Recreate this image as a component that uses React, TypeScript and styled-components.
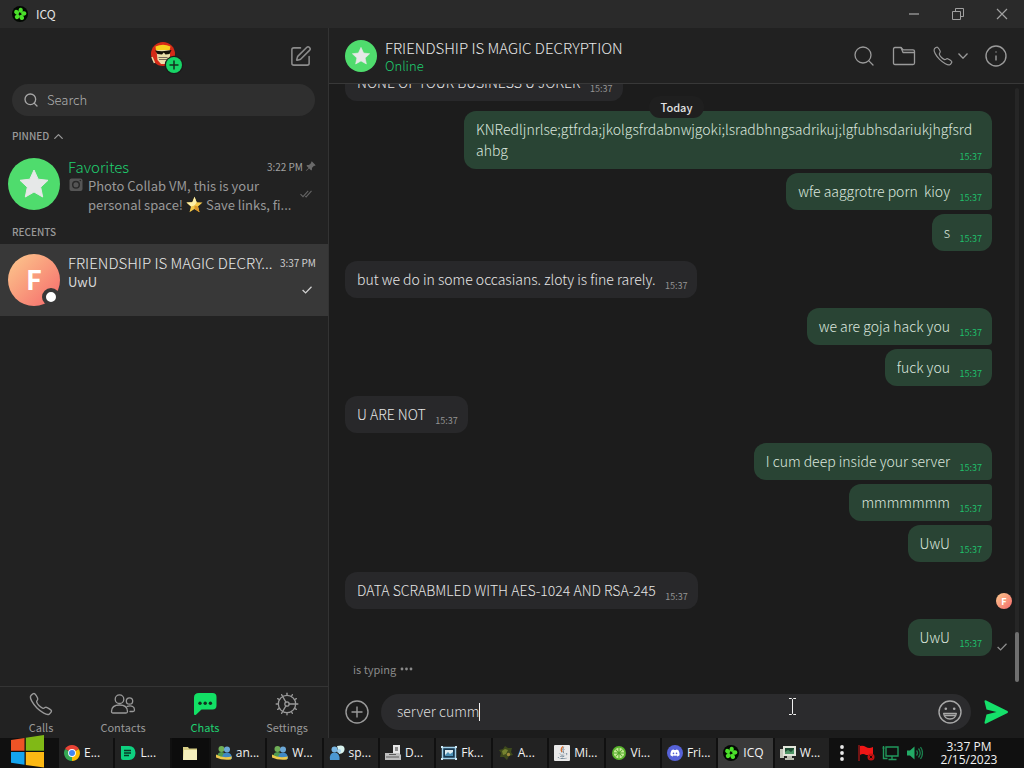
import React from "react";
import styled, { createGlobalStyle, css } from "styled-components";
import { Search, Info, Cog, SquarePen, ChevronUp } from "lucide-react";
import { FaDiscord, FaJava } from "react-icons/fa";
import { BsPinAngleFill } from "react-icons/bs";
import { IoCallOutline } from "react-icons/io5";

const GlobalStyle = createGlobalStyle`
  * { box-sizing: border-box; }
  body { margin: 0; background: #1c1c1c; }
  button, input { font: inherit; color: inherit; border: 0; padding: 0; margin: 0; background: none; }
  h1, h2, p, ul { margin: 0; padding: 0; font-weight: inherit; }
  ul { list-style: none; }
  svg { display: block; flex: none; }
`;

const ui = `"Noto Sans CJK SC", "Open Sans", sans-serif`;

const Screen = styled.div`
  height: 100vh;
  display: flex;
  flex-direction: column;
  overflow: hidden;
  background: #1c1c1c;
  color: #dcdcdc;
  font-family: ${ui};
  font-size: 14px;
  line-height: 20px;
  font-weight: 300;
`;

const TitleBar = styled.header`
  flex: none;
  height: 28px;
  display: flex;
  align-items: center;
  justify-content: space-between;
  padding: 0 8px 0 12px;
  background: #2a2a2a;
`;

const AppName = styled.h1`
  display: flex;
  align-items: center;
  gap: 8px;
  font-size: 12px;
  line-height: 16px;
  font-weight: 400;
  color: #e4e4e4;
`;

const WindowButtons = styled.div`
  display: flex;
  gap: 16px;
`;

const WindowButton = styled.button`
  width: 28px;
  height: 28px;
  display: grid;
  place-items: center;
  color: #a0a0a0;
`;

const Body = styled.div`
  flex: 1;
  min-height: 0;
  display: flex;
`;

const Sidebar = styled.aside`
  flex: none;
  width: 329px;
  display: flex;
  flex-direction: column;
  background: #222222;
  border-right: 1px solid #333333;
`;

const SidebarTop = styled.div`
  height: 56px;
  display: grid;
  grid-template-columns: 1fr auto 1fr;
  align-items: center;
  padding: 0 16px;
`;

const ProfileButton = styled.button`
  grid-column: 2;
  width: 34px;
  height: 36px;
  display: grid;
  place-items: center;
`;

const ComposeButton = styled.button`
  grid-column: 3;
  justify-self: end;
  color: #8c8c8c;
`;

const SearchBox = styled.label`
  height: 32px;
  margin: 0 13px 8px 12px;
  padding: 0 11px;
  display: flex;
  align-items: center;
  gap: 8px;
  border-radius: 16px;
  background: #2f2f2f;
  color: #a6a6a6;
`;

const SearchInput = styled.input`
  flex: 1;
  min-width: 0;
  outline: none;
  font-size: 13px;
  line-height: 20px;
  &::placeholder { color: #b0b0b0; opacity: 1; }
`;

const SectionLabel = styled.h2`
  height: 24px;
  display: flex;
  align-items: center;
  gap: 2px;
  padding-left: 12px;
  font-size: 10px;
  line-height: 16px;
  font-weight: 500;
  color: #9a9a9a;
`;

const ChatRow = styled.button<{ $active?: boolean }>`
  width: 100%;
  height: 72px;
  display: flex;
  gap: 8px;
  padding: 0 12px 0 8px;
  text-align: left;
  background: ${(p) => (p.$active ? "#383838" : "none")};
`;

const AvatarSlot = styled.span`
  position: relative;
  flex: none;
  align-self: center;
  width: 52px;
  height: 52px;
`;

const Presence = styled.span`
  position: absolute;
  right: 0;
  bottom: 0;
  width: 18px;
  height: 18px;
  border: 4px solid #383838;
  border-radius: 50%;
  background: #ffffff;
`;

const ChatText = styled.span`
  flex: 1;
  min-width: 0;
  display: flex;
  flex-direction: column;
  padding-top: 9px;
`;

const ChatHead = styled.span`
  display: flex;
  align-items: center;
  gap: 6px;
  height: 19px;
`;

const ChatName = styled.span<{ $accent?: boolean }>`
  flex: 1;
  min-width: 0;
  white-space: nowrap;
  font-size: 15px;
  line-height: 20px;
  color: ${(p) => (p.$accent ? "#1fd070" : "#e8e8e8")};
`;

const ChatTime = styled.span<{ $active?: boolean }>`
  display: flex;
  align-items: center;
  gap: 2px;
  font-size: 10px;
  line-height: 16px;
  font-weight: 400;
  color: ${(p) => (p.$active ? "#d0d0d0" : "#a0a0a0")};
  svg { color: #6a6a6a; }
`;

const Preview = styled.span<{ $active?: boolean }>`
  display: flex;
  align-items: flex-start;
  gap: 5px;
  font-size: 13px;
  line-height: 19px;
  font-weight: 400;
  color: ${(p) => (p.$active ? "#d8d8d8" : "#999999")};
`;

const PreviewText = styled.span`
  flex: 1;
  min-width: 0;
`;

const PreviewLine = styled.span`
  display: flex;
  align-items: center;
  white-space: pre;
`;

const CameraSlot = styled.span`
  padding-top: 1px;
`;

const StatusSlot = styled.span`
  margin-right: 4px;
  padding-top: 14px;
`;

const Tabs = styled.nav`
  margin-top: auto;
  height: 52px;
  display: grid;
  grid-template-columns: repeat(4, 1fr);
  border-top: 1px solid #343434;
`;

const Tab = styled.button<{ $active?: boolean }>`
  display: flex;
  flex-direction: column;
  align-items: center;
  padding-top: 4px;
  gap: 2px;
  font-size: 11px;
  line-height: 16px;
  font-weight: 400;
  color: ${(p) => (p.$active ? "#1fd070" : "#999999")};
`;

const Conversation = styled.main`
  flex: 1;
  min-width: 0;
  display: flex;
  flex-direction: column;
`;

const ConversationHead = styled.div`
  flex: none;
  height: 56px;
  display: flex;
  align-items: center;
  gap: 8px;
  padding: 0 16px;
  background: #212121;
  border-bottom: 1px solid #383838;
`;

const PeerInfo = styled.div`
  flex: 1;
  min-width: 0;
  padding-top: 2px;
`;

const PeerName = styled.h2`
  font-size: 15px;
  line-height: 18px;
  color: #e8e8e8;
`;

const PeerStatus = styled.p`
  font-size: 13px;
  line-height: 18px;
  color: #1fd070;
`;

const HeadActions = styled.div`
  display: flex;
  align-items: center;
  gap: 16px;
  color: #9a9a9a;
`;

const IconButton = styled.button`
  display: flex;
  align-items: center;
  gap: 4px;
`;

const Handset = styled(IoCallOutline)`
  path { stroke-width: 27px; }
`;

const Thread = styled.section`
  position: relative;
  flex: 1;
  min-height: 0;
  overflow: hidden;
  display: flex;
  flex-direction: column;
  justify-content: flex-end;
  padding: 0 12px 10px 16px;
`;

const DayChip = styled.div`
  position: absolute;
  z-index: 1;
  top: 12px;
  left: 50%;
  transform: translateX(-50%);
  padding: 2px 12px;
  border-radius: 11px;
  background: #1f1f1f;
  font-size: 11px;
  line-height: 18px;
  font-weight: 500;
  color: #e2e2e2;
`;

const ScrollTrack = styled.div`
  position: absolute;
  top: 4px;
  right: 5px;
  bottom: 6px;
  width: 4px;
  display: flex;
  align-items: flex-end;
  border-radius: 2px;
  background: #262626;
`;

const ScrollThumb = styled.div`
  width: 4px;
  height: 50px;
  border-radius: 2px;
  background: #6f6f6f;
`;

const MessageRow = styled.div<{ $own: boolean; $follows: boolean }>`
  flex: none;
  display: grid;
  grid-template-columns: minmax(0, 1fr) 20px;
  align-items: end;
  justify-items: ${(p) => (p.$own ? "end" : "start")};
  margin-top: ${(p) => (p.$follows ? "4px" : "10px")};
`;

const Bubble = styled.div<{ $own: boolean; $follows: boolean; $followed: boolean }>`
  position: relative;
  max-width: 528px;
  padding: 8px 18px 8px 12px;
  font-size: 14px;
  line-height: 21px;
  white-space: pre-wrap;
  overflow-wrap: anywhere;
  border-radius: 12px;
  ${(p) =>
    p.$own
      ? css`
          background: #294434;
          color: #dbe6de;
          border-top-right-radius: ${p.$follows ? "4px" : "12px"};
          border-bottom-right-radius: ${p.$followed ? "4px" : "12px"};
        `
      : css`
          background: #28282a;
          color: #e6e6e6;
        `}
  &::after {
    content: "";
    display: inline-block;
    width: 24px;
  }
`;

const Stamp = styled.time<{ $own: boolean }>`
  position: absolute;
  right: 10px;
  bottom: 6px;
  font-size: 9px;
  line-height: 12px;
  font-weight: 400;
  color: ${(p) => (p.$own ? "#1fbf6b" : "#949494")};
`;

const Receipt = styled.span`
  justify-self: end;
  padding: 0 5px 5px 0;
`;

const ReadBy = styled.span`
  justify-self: end;
`;

const Typing = styled.p`
  flex: none;
  display: flex;
  align-items: center;
  gap: 4px;
  padding: 4px 0 0 8px;
  font-size: 11px;
  line-height: 18px;
  font-weight: 400;
  color: #8a8a8a;
`;

const Composer = styled.form`
  flex: none;
  height: 50px;
  display: flex;
  align-items: center;
  gap: 12px;
  padding: 0 15px 2px 16px;
  color: #9a9a9a;
`;

const ComposerField = styled.label`
  position: relative;
  flex: 1;
  min-width: 0;
  height: 36px;
  display: flex;
  align-items: center;
  padding: 0 9px 0 16px;
  border-radius: 18px;
  background: #2b2b2d;
`;

const ComposerInput = styled.input`
  field-sizing: content;
  min-width: 1px;
  max-width: 80%;
  height: 22px;
  padding-bottom: 2px;
  outline: none;
  caret-color: transparent;
  font-size: 14px;
  line-height: 20px;
  color: #dedede;
`;

const Caret = styled.span`
  width: 1px;
  height: 18px;
  background: #f0f0f0;
`;

const EmojiButton = styled.button`
  margin-left: auto;
`;

const Pointer = styled.span`
  position: absolute;
  left: 69%;
  top: 4px;
`;

const Taskbar = styled.footer`
  flex: none;
  height: 30px;
  display: flex;
  background: #101010;
  font-family: "Open Sans", "Noto Sans", sans-serif;
  font-size: 12px;
  font-weight: 400;
  color: #f2f2f2;
`;

const StartButton = styled.button`
  flex: none;
  width: 59px;
  display: flex;
  justify-content: center;
  align-items: flex-end;
  padding-right: 5px;
`;

const Tasks = styled.ul`
  flex: 1;
  min-width: 0;
  display: flex;
  gap: 2px;
`;

const TaskItem = styled.li<{ $closed: boolean }>`
  flex: ${(p) => (p.$closed ? "0 0 37px" : "1 1 0")};
  min-width: 0;
`;

const Task = styled.button<{ $kind?: "active" | "closed" }>`
  width: 100%;
  height: 30px;
  display: flex;
  align-items: center;
  justify-content: ${(p) => (p.$kind === "closed" ? "center" : "flex-start")};
  gap: 4px;
  padding-left: ${(p) => (p.$kind === "closed" ? "0" : "5px")};
  white-space: nowrap;
  background: ${(p) =>
    p.$kind === "active" ? "#393939" : p.$kind === "closed" ? "#0c0c0c" : "#222222"};
`;

const Tray = styled.div`
  flex: none;
  display: flex;
  align-items: center;
  gap: 7px;
  padding-left: 11px;
`;

const TrayOverflow = styled.button`
  margin-right: 7px;
`;

const Clock = styled.time`
  flex: none;
  width: 101px;
  padding: 2px 9px 0 0;
  text-align: center;
  line-height: 13px;
`;

const IcqFlower = ({ size = 16 }: { size?: number }) => (
  <svg width={size} height={size} viewBox="0 0 16 16" aria-hidden="true">
    <circle cx="8" cy="8" r="8" fill="#030803" />
    <g fill="#4be02a">
      {[0, 72, 144, 216, 288].map((a) => (
        <ellipse key={a} cx="8" cy="4.200" rx="2.200" ry="2.600" transform={`rotate(${a + 10} 8 8)`} />
      ))}
    </g>
    <circle cx="8" cy="8" r="1.100" fill="#071207" />
  </svg>
);

const StarAvatar = ({ size }: { size: number }) => (
  <svg width={size} height={size} viewBox="0 0 52 52" aria-hidden="true">
    <circle cx="26" cy="26" r="26" fill="#4fdc6d" />
    <path
      d="M26 12l4.200 9.200 9.800 1.100-7.300 6.900 2 9.800-8.700-5-8.700 5 2-9.800-7.300-6.900 9.800-1.100z"
      fill="#e6e8e8"
      stroke="#e6e8e8"
      strokeWidth="1"
      strokeLinejoin="round"
    />
  </svg>
);

const LetterDisc = styled.span<{ $small?: boolean }>`
  display: grid;
  place-items: center;
  width: ${(p) => (p.$small ? "16px" : "52px")};
  height: ${(p) => (p.$small ? "16px" : "52px")};
  padding-bottom: ${(p) => (p.$small ? "0" : "4px")};
  border-radius: 50%;
  background: linear-gradient(135deg, #fbc08a 10%, #f99a7c 50%, #f56d6d 95%);
  font-size: ${(p) => (p.$small ? "9px" : "27px")};
  line-height: 1;
  font-weight: 700;
  color: #ffffff;
`;

const ProfilePicture = () => (
  <svg width="38" height="36" viewBox="-2 0 38 36" aria-hidden="true">
    <circle cx="14" cy="16" r="12" fill="#d52a17" />
    <path d="M6.500 8.500q7.500-3.500 15 0l-1 4H7z" fill="#f7cf1d" />
    <path d="M7.500 12h13.500v6l-1.500 5-3.500 3h-4l-3.500-4z" fill="#e9dda9" />
    <path d="M6 12.500q8 1.500 16.500-.5l-2 4-4 .5-1.700-2-1.800 2-4.500-.5z" fill="#141008" />
    <path d="M9.500 19.500h9M10 21.500h8" stroke="#77685a" strokeWidth="1" />
    <path d="M3 19l2.500 6" stroke="#e9dda9" strokeWidth="1.500" />
    <circle cx="25" cy="27" r="9.300" fill="#1b1b1b" />
    <circle cx="25" cy="27" r="8" fill="#17d566" />
    <path d="M25 22.500v9M20.500 27h9" stroke="#14301f" strokeWidth="1.500" />
  </svg>
);

const Check = ({ color }: { color: string }) => (
  <svg width="10" height="8" viewBox="0 0 10 8" fill="none" stroke={color} strokeWidth="1.300" aria-hidden="true">
    <path d="M.6 4l3 2.900L9.500.8" />
  </svg>
);

const DoubleCheck = () => (
  <svg width="12" height="8" viewBox="0 0 12 8" fill="none" stroke="#646464" strokeWidth="1.100" aria-hidden="true">
    <path d="M.5 4.200l2.500 2.500L8.200.8M5.300 6.200l.8.700 5.400-6.100" />
  </svg>
);

const GoldStar = () => (
  <svg width="17" height="17" viewBox="0 0 18 18" aria-hidden="true">
    <path d="M9 .8l2.300 5.800 6.200.4-4.800 4 1.600 6.100L9 13.700l-5.300 3.400 1.600-6.100-4.800-4 6.200-.4z" fill="#f3c94b" />
    <path d="M9 .8l2.300 5.800L9 10l-2.300-3.400zM.5 7l6.200-.4L9 10l-3.700 1z" fill="#fdf0a8" />
    <path d="M9 10l3.700 1 1.600 6.100L9 13.700z" fill="#d9952a" />
  </svg>
);

const CameraGlyph = () => (
  <svg width="15" height="15" viewBox="0 0 15 15" aria-hidden="true">
    <rect x="1.500" y="1.500" width="13" height="12.500" rx="2" fill="#555555" />
    <circle cx="8" cy="7.800" r="3.300" fill="none" stroke="#2a2a2a" strokeWidth="1.500" />
    <circle cx="12.300" cy="3.500" r=".8" fill="#2a2a2a" />
  </svg>
);

const FolderGlyph = () => (
  <svg width="24" height="24" viewBox="0 0 24 24" fill="none" stroke="currentColor" strokeWidth="1.300" strokeLinejoin="round" aria-hidden="true">
    <path d="M1.500 19V5q0-1.500 1.500-1.500h6l2 2.300h10q1.500 0 1.500 1.500V19q0 1.500-1.500 1.500H3Q1.500 20.500 1.500 19z" />
    <path d="M9 3.500L11 8.500H22.500" />
  </svg>
);

const DropGlyph = () => (
  <svg width="10" height="6" viewBox="0 0 10 6" fill="none" stroke="currentColor" strokeWidth="1.300" aria-hidden="true">
    <path d="M.5.500L5 5.200 9.500.500" />
  </svg>
);

const ContactsGlyph = () => (
  <svg width="26" height="26" viewBox="0 0 26 26" fill="none" stroke="currentColor" strokeWidth="1.300" strokeLinecap="round" strokeLinejoin="round" aria-hidden="true">
    <circle cx="9.500" cy="8.200" r="4.300" />
    <path d="M1.500 20.500q0-6.500 8-6.500t8 6.500q0 1.500-1.500 1.500H3q-1.500 0-1.500-1.500z" />
    <circle cx="19.500" cy="10" r="3.200" />
    <path d="M17.200 15.300q7.300-1.500 7.300 3.700 0 1.500-1.500 1.500h-3" />
  </svg>
);

const ChatsGlyph = () => (
  <svg width="26" height="26" viewBox="0 0 26 26" aria-hidden="true">
    <path d="M7 2h13.500q4 0 4 4v8.500q0 4-4 4h-11l-5.500 5.200q-2 1-2-1V6.500Q2 2 7 2z" fill="#12e065" />
    <g fill="#12301f">
      <circle cx="8" cy="12.300" r="1.700" />
      <circle cx="13.200" cy="12.300" r="1.700" />
      <circle cx="18.400" cy="12.300" r="1.700" />
    </g>
  </svg>
);

const AddGlyph = () => (
  <svg width="24" height="24" viewBox="0 0 24 24" fill="none" stroke="currentColor" strokeWidth="1.400" aria-hidden="true">
    <circle cx="12" cy="12" r="11" />
    <path d="M12 6.500v11M6.500 12h11" />
  </svg>
);

const SmileGlyph = () => (
  <svg width="24" height="24" viewBox="0 0 24 24" fill="none" stroke="#a8a8a8" strokeWidth="1.400" aria-hidden="true">
    <circle cx="12" cy="12" r="11" />
    <path d="M5.700 13.500h12.600q-.8 5.500-6.300 5.500t-6.300-5.500zM7 15.500h10" strokeLinejoin="round" />
    <circle cx="7.800" cy="8.800" r="1.300" fill="#a8a8a8" stroke="none" />
    <circle cx="16.200" cy="8.800" r="1.300" fill="#a8a8a8" stroke="none" />
  </svg>
);

const SendGlyph = () => (
  <svg width="26" height="26" viewBox="0 0 26 26" aria-hidden="true">
    <path d="M1.500 2.500q0-1.700 1.700-1L24.500 12q1.200 1 0 2L3.200 24.500q-1.700.7-1.700-1L3.500 15.500l10-2.500-10-2.500z" fill="#15e06a" />
  </svg>
);

const TypingDots = () => (
  <svg width="14" height="4" viewBox="0 0 14 4" fill="#8a8a8a" aria-hidden="true">
    <circle cx="2" cy="2" r="1.400" />
    <circle cx="6.500" cy="2" r="1.400" />
    <circle cx="11" cy="2" r="1.400" />
  </svg>
);

const IBeam = () => (
  <svg width="9" height="17" viewBox="0 0 9 17" fill="none" stroke="#f2f2f2" aria-hidden="true">
    <path d="M1 .5h2.500l1 1 1-1H8M1 16.500h2.500l1-1 1 1H8M4.500 1.500v14" />
  </svg>
);

const WindowsLogo = () => (
  <svg width="33" height="33" viewBox="0 0 33 33" aria-hidden="true">
    <path d="M0 5l13.500-2v12.700H0z" fill="#ee5326" />
    <path d="M14.800 2.800L33 0v15.700H14.800z" fill="#80b916" />
    <path d="M0 17h13.500v12.700L0 27.800z" fill="#13a4ee" />
    <path d="M14.800 17H33v15.500l-18.200-2.600z" fill="#fcb813" />
  </svg>
);

const ChromeIcon = () => (
  <svg width="16" height="16" viewBox="0 0 16 16" aria-hidden="true">
    <path d="M8 8L1.100 4A8 8 0 0 1 14.900 4z" fill="#e94335" />
    <path d="M8 8l6.900-4A8 8 0 0 1 8 16z" fill="#fbbd05" />
    <path d="M8 8v8A8 8 0 0 1 1.100 4z" fill="#34a753" />
    <circle cx="8" cy="8" r="3.900" fill="#ffffff" />
    <circle cx="8" cy="8" r="3" fill="#4285f4" />
  </svg>
);

const NotesIcon = () => (
  <svg width="16" height="16" viewBox="0 0 16 16" aria-hidden="true">
    <path d="M1 1h8q6 0 6.500 7-.5 7-6.500 7H3q-2 0-2-2z" fill="#0ed180" />
    <path d="M4 5.500h7M4 8h7M4 10.500h5" stroke="#073a26" strokeWidth="1.300" />
  </svg>
);

const FolderIcon = () => (
  <svg width="16" height="16" viewBox="0 0 16 16" aria-hidden="true">
    <path d="M1 2h5l1 1.500h8V15H1z" fill="#d8cf86" />
    <path d="M2 5h13v10H1z" fill="#f5efbd" />
  </svg>
);

const PeopleIcon = () => (
  <svg width="16" height="16" viewBox="0 0 16 16" aria-hidden="true">
    <circle cx="5.500" cy="4" r="3" fill="#6fae57" />
    <circle cx="11" cy="4.500" r="3" fill="#6ba7d6" />
    <path d="M1 13q0-6 4.500-6T10 13z" fill="#4f9a50" />
    <path d="M6 14q0-6.500 5-6.500t5 6.500z" fill="#3f87c3" />
    <path d="M0 9.500q6 4 16 2l-1 3q-9 1-15-2z" fill="#edc84c" />
  </svg>
);

const MessengerIcon = () => (
  <svg width="16" height="16" viewBox="0 0 16 16" aria-hidden="true">
    <path d="M8 1q7-2 7.500 2.500T10 9z" fill="#d9f3ee" />
    <circle cx="5.500" cy="4.500" r="3" fill="#79b7e4" />
    <path d="M1 15q-1-7.500 4.500-7.500T10.500 15z" fill="#4b98d3" />
    <circle cx="10" cy="6" r="2" fill="#a5d3ef" />
  </svg>
);

const DriveIcon = () => (
  <svg width="16" height="16" viewBox="0 0 16 16" aria-hidden="true">
    <path d="M8 0h7v9H8z" fill="#e6e6e6" />
    <path d="M10 2h3v4h-3z" fill="#8a8a8a" />
    <path d="M0 8h14l2 2v5H0z" fill="#bdbdbd" />
    <path d="M1 12h13M4 9.500h7" stroke="#5d5d5d" />
  </svg>
);

const PictureIcon = () => (
  <svg width="16" height="16" viewBox="0 0 16 16" aria-hidden="true">
    <path d="M1.500 2.500h13v11h-13z" fill="#16374f" stroke="#9fd0ea" strokeWidth="1.500" />
    <path d="M4 5h8v6H4z" fill="#dbeaf0" />
    <path d="M4 10l3-3 2 2 3-2v4H4z" fill="#4b8fb5" />
    <path d="M0 1h2v2H0zM14 1h2v2h-2zM0 13h2v2H0zM14 13h2v2h-2z" fill="#cfe9f6" />
  </svg>
);

const PlantIcon = () => (
  <svg width="16" height="16" viewBox="0 0 16 16" aria-hidden="true">
    <path d="M1 5l4-1 2-3 3 2 4 0-1 4 2 3-4 1-2 4-3-3-4 0 1-4z" fill="#3e4a1c" />
    <path d="M4 6l3-2 3 1-2 4-3 1z" fill="#75822f" />
    <circle cx="10.500" cy="9.500" r="1.700" fill="#a08a3d" />
  </svg>
);

const JavaIcon = () => (
  <svg width="16" height="16" viewBox="0 0 16 16" aria-hidden="true">
    <rect width="16" height="16" rx="1" fill="#e9e9e9" />
    <FaJava x="2" y="1" size={13} color="#476379" />
    <path d="M9 1.500q-3 2.500-1 5.500" stroke="#e06a24" strokeWidth="1.200" fill="none" />
  </svg>
);

const LimeIcon = () => (
  <svg width="16" height="14" viewBox="0 0 16 16" aria-hidden="true">
    <circle cx="8" cy="8" r="8" fill="#58b52c" />
    <circle cx="8" cy="8" r="6" fill="#c9ec9a" />
    <path d="M8 2v12M2 8h12M4 4l8 8M12 4l-8 8" stroke="#51a72b" strokeWidth="1.200" />
  </svg>
);

const DiscordIcon = () => (
  <svg width="16" height="16" viewBox="0 0 16 16" aria-hidden="true">
    <circle cx="8" cy="8" r="8" fill="#5662d8" />
    <FaDiscord x="3" y="3" size={10} color="#ffffff" />
  </svg>
);

const ComputerIcon = () => (
  <svg width="16" height="16" viewBox="0 0 16 16" aria-hidden="true">
    <path d="M0 4h4v9H0z" fill="#c2c6ba" />
    <path d="M3 1h13v10H3z" fill="#e1e5da" />
    <path d="M5 3h9v6H5z" fill="#1d4b32" />
    <path d="M5 7l3-2 3 2 3-3v5H5z" fill="#4e9466" />
    <path d="M7 11h5v2h2v2H5v-2h2z" fill="#b8bcb0" />
  </svg>
);

const TrayDots = () => (
  <svg width="4" height="16" viewBox="0 0 4 16" fill="#e8e8e8" aria-hidden="true">
    <circle cx="2" cy="2" r="1.900" />
    <circle cx="2" cy="8" r="1.900" />
    <circle cx="2" cy="14" r="1.900" />
  </svg>
);

const FlagIcon = () => (
  <svg width="17" height="16" viewBox="0 0 17 16" aria-hidden="true">
    <path d="M1 0v16" stroke="#a81818" strokeWidth="1.300" />
    <path d="M2 1q3-1 6 1t7 0v8H8q-3-2-6 0z" fill="#f01616" />
    <circle cx="13" cy="12" r="3.500" fill="#c31212" />
    <path d="M11.700 10.700l2.600 2.600m0-2.600l-2.600 2.600" stroke="#2a0505" />
  </svg>
);

const NetworkIcon = () => (
  <svg width="17" height="16" viewBox="0 0 17 16" fill="none" stroke="#21985c" strokeWidth="1.400" aria-hidden="true">
    <path d="M4 2h12v9H4zM10 11v3.500M6.500 14.500h8M1.500 1v12.500h4M.5 3h2" />
  </svg>
);

const VolumeIcon = () => (
  <svg width="17" height="16" viewBox="0 0 17 16" aria-hidden="true">
    <path d="M1 5.500h3L8.500 1.500v13L4 10.500H1z" fill="#23ab66" />
    <path d="M10.500 5.500q2 2.500 0 5M12.500 3.500q3.500 4.500 0 9M14.500 2q4 6 0 12" fill="none" stroke="#1b7d4c" strokeWidth="1.300" />
  </svg>
);

type Message = { text: string; own?: boolean; mark?: "avatar" | "sent" };

const messages: Message[] = [
  { text: "NONE OF YOUR BUSINESS U JOKER" },
  { text: "KNRedljnrlse;gtfrda;jkolgsfrdabnwjgoki;lsradbhngsadrikuj;lgfubhsdariukjhgfsrdahbg", own: true },
  { text: "wfe aaggrotre porn  kioy", own: true },
  { text: "s", own: true },
  { text: "but we do in some occasians. zloty is fine rarely." },
  { text: "we are goja hack you", own: true },
  { text: "fuck you", own: true },
  { text: "U ARE NOT" },
  { text: "I cum deep inside your server", own: true },
  { text: "mmmmmmm", own: true },
  { text: "UwU", own: true },
  { text: "DATA SCRABMLED WITH AES-1024 AND RSA-245", mark: "avatar" },
  { text: "UwU", own: true, mark: "sent" },
];

const tasks: { label: string; icon: React.ReactNode; kind?: "active" | "closed" }[] = [
  { label: "E...", icon: <ChromeIcon /> },
  { label: "L...", icon: <NotesIcon /> },
  { label: "", icon: <FolderIcon />, kind: "closed" },
  { label: "an...", icon: <PeopleIcon /> },
  { label: "W...", icon: <PeopleIcon /> },
  { label: "sp...", icon: <MessengerIcon /> },
  { label: "D...", icon: <DriveIcon /> },
  { label: "Fk...", icon: <PictureIcon /> },
  { label: "A...", icon: <PlantIcon /> },
  { label: "Mi...", icon: <JavaIcon /> },
  { label: "Vi...", icon: <LimeIcon /> },
  { label: "Fri...", icon: <DiscordIcon /> },
  { label: "ICQ", icon: <IcqFlower />, kind: "active" },
  { label: "W...", icon: <ComputerIcon /> },
];

export default function App() {
  const [draft, setDraft] = React.useState("server cumm");

  return (
    <Screen>
      <GlobalStyle />
      <TitleBar>
        <AppName>
          <IcqFlower />
          ICQ
        </AppName>
        <WindowButtons>
          <WindowButton aria-label="Minimize">
            <svg width="12" height="12" viewBox="0 0 12 12" stroke="currentColor" strokeWidth="1.300">
              <path d="M1 6h10" />
            </svg>
          </WindowButton>
          <WindowButton aria-label="Restore">
            <svg width="12" height="12" viewBox="0 0 12 12" fill="none" stroke="currentColor">
              <path d="M.5 3.500h8v8h-8zM3.500 3.500v-3h8v8h-3" />
            </svg>
          </WindowButton>
          <WindowButton aria-label="Close">
            <svg width="12" height="12" viewBox="0 0 12 12" stroke="currentColor" strokeWidth="1.200">
              <path d="M1 1l10 10M11 1L1 11" />
            </svg>
          </WindowButton>
        </WindowButtons>
      </TitleBar>

      <Body>
        <Sidebar>
          <SidebarTop>
            <ProfileButton aria-label="Profile">
              <ProfilePicture />
            </ProfileButton>
            <ComposeButton aria-label="New chat">
              <SquarePen size={23} strokeWidth={1.6} />
            </ComposeButton>
          </SidebarTop>
          <SearchBox>
            <Search size={16} strokeWidth={2} />
            <SearchInput type="text" placeholder="Search" aria-label="Search" />
          </SearchBox>

          <SectionLabel>
            PINNED <ChevronUp size={15} strokeWidth={2} />
          </SectionLabel>
          <ChatRow>
            <AvatarSlot>
              <StarAvatar size={52} />
            </AvatarSlot>
            <ChatText>
              <ChatHead>
                <ChatName $accent>Favorites</ChatName>
                <ChatTime>
                  3:22 PM <BsPinAngleFill size={11} />
                </ChatTime>
              </ChatHead>
              <Preview>
                <CameraSlot>
                  <CameraGlyph />
                </CameraSlot>
                <PreviewText>
                  <PreviewLine>Photo Collab VM, this is your</PreviewLine>
                  <PreviewLine>
                    {"personal space! "}
                    <GoldStar />
                    {" Save links, fi..."}
                  </PreviewLine>
                </PreviewText>
                <StatusSlot>
                  <DoubleCheck />
                </StatusSlot>
              </Preview>
            </ChatText>
          </ChatRow>

          <SectionLabel>RECENTS</SectionLabel>
          <ChatRow $active>
            <AvatarSlot>
              <LetterDisc>F</LetterDisc>
              <Presence />
            </AvatarSlot>
            <ChatText>
              <ChatHead>
                <ChatName>FRIENDSHIP IS MAGIC DECRY...</ChatName>
                <ChatTime $active>3:37 PM</ChatTime>
              </ChatHead>
              <Preview $active>
                <PreviewText>UwU</PreviewText>
                <StatusSlot>
                  <Check color="#d0d0d0" />
                </StatusSlot>
              </Preview>
            </ChatText>
          </ChatRow>

          <Tabs>
            <Tab>
              <Handset size={26} />
              Calls
            </Tab>
            <Tab>
              <ContactsGlyph />
              Contacts
            </Tab>
            <Tab $active>
              <ChatsGlyph />
              Chats
            </Tab>
            <Tab>
              <Cog size={26} strokeWidth={1.2} />
              Settings
            </Tab>
          </Tabs>
        </Sidebar>

        <Conversation>
          <ConversationHead>
            <StarAvatar size={32} />
            <PeerInfo>
              <PeerName>FRIENDSHIP IS MAGIC DECRYPTION</PeerName>
              <PeerStatus>Online</PeerStatus>
            </PeerInfo>
            <HeadActions>
              <IconButton aria-label="Search in chat">
                <Search size={24} strokeWidth={1.3} />
              </IconButton>
              <IconButton aria-label="Files">
                <FolderGlyph />
              </IconButton>
              <IconButton aria-label="Call">
                <Handset size={22} />
                <DropGlyph />
              </IconButton>
              <IconButton aria-label="Chat info">
                <Info size={24} strokeWidth={1.4} />
              </IconButton>
            </HeadActions>
          </ConversationHead>

          <Thread>
            <DayChip>Today</DayChip>
            {messages.map((m, i) => {
              const own = !!m.own;
              const follows = i > 0 && !!messages[i - 1].own === own;
              const followed = i < messages.length - 1 && !!messages[i + 1].own === own;
              return (
                <MessageRow key={i} $own={own} $follows={follows}>
                  <Bubble $own={own} $follows={follows} $followed={followed}>
                    {m.text}
                    <Stamp $own={own}>15:37</Stamp>
                  </Bubble>
                  {m.mark === "sent" && (
                    <Receipt>
                      <Check color="#8e8e8e" />
                    </Receipt>
                  )}
                  {m.mark === "avatar" && (
                    <ReadBy>
                      <LetterDisc $small>F</LetterDisc>
                    </ReadBy>
                  )}
                </MessageRow>
              );
            })}
            <Typing>
              is typing <TypingDots />
            </Typing>
            <ScrollTrack>
              <ScrollThumb />
            </ScrollTrack>
          </Thread>

          <Composer onSubmit={(e) => e.preventDefault()}>
            <IconButton type="button" aria-label="Attach">
              <AddGlyph />
            </IconButton>
            <ComposerField>
              <ComposerInput
                type="text"
                aria-label="Message"
                value={draft}
                onChange={(e) => setDraft(e.target.value)}
              />
              <Caret />
              <EmojiButton type="button" aria-label="Emoji">
                <SmileGlyph />
              </EmojiButton>
              <Pointer>
                <IBeam />
              </Pointer>
            </ComposerField>
            <IconButton type="submit" aria-label="Send">
              <SendGlyph />
            </IconButton>
          </Composer>
        </Conversation>
      </Body>

      <Taskbar>
        <StartButton aria-label="Start">
          <WindowsLogo />
        </StartButton>
        <Tasks>
          {tasks.map((t, i) => (
            <TaskItem key={i} $closed={t.kind === "closed"}>
              <Task $kind={t.kind} aria-label={t.label || "Files"}>
                {t.icon}
                {t.label}
              </Task>
            </TaskItem>
          ))}
        </Tasks>
        <Tray>
          <TrayOverflow aria-label="More">
            <TrayDots />
          </TrayOverflow>
          <FlagIcon />
          <NetworkIcon />
          <VolumeIcon />
        </Tray>
        <Clock>
          3:37 PM
          <br />
          2/15/2023
        </Clock>
      </Taskbar>
    </Screen>
  );
}
